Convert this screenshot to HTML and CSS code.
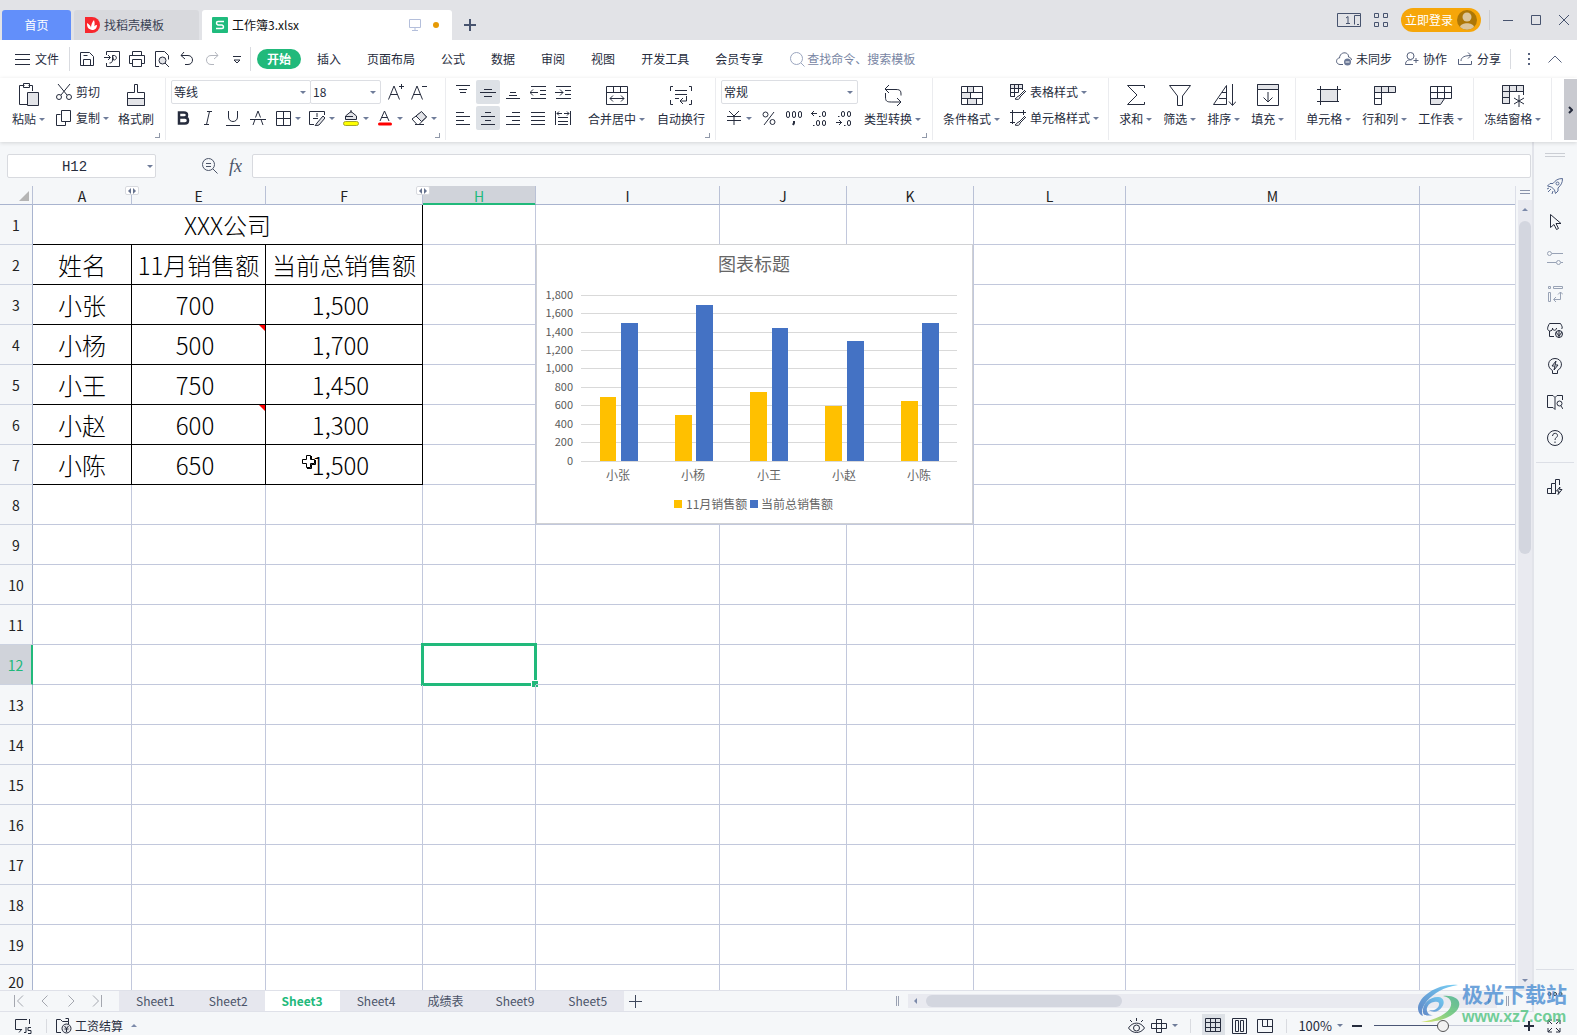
FILE: index.html
```html
<!DOCTYPE html>
<html lang="zh-CN">
<head>
<meta charset="utf-8">
<title>工作簿3.xlsx</title>
<link rel="stylesheet" href="styles.css">
</head>
<body>
<header class="titlebar">
  <button class="tab tab-home">首页</button>
  <button class="tab tab-docer">
    <svg width="16" height="16" viewBox="0 0 16 16"><path d="M1 0h7a8 8 0 0 1 0 16H1z" fill="#f8272d"/><path d="M8 13C4 12 3 10 3 6c2 1 4 3 4 5 0-3 1-6 3-8 1 3 1 6-1 8 1-2 2-3 4-3 0 3-2 5-5 5z" fill="#fff"/></svg>
    找稻壳模板
  </button>
  <button class="tab tab-file">
    <svg width="16" height="16" viewBox="0 0 16 16"><rect width="16" height="16" rx="1" fill="#1fbb7d"/><path d="M12 4.5H6C4 4.5 4 7.5 6 8h4c2 .5 2 3.500 0 3.500H4" fill="none" stroke="#fff" stroke-width="1.500"/></svg>
    工作簿3.xlsx
    <svg class="tab-screen" width="12" height="12" viewBox="0 0 12 12"><path d="M.5.5h11v8H.5zM6 9v2M3 11.500h6"/></svg>
    <span class="unsaved"></span>
  </button>
  <button class="newtab" aria-label="新建"><svg width="14" height="14" viewBox="0 0 14 14"><path d="M7 1v12M1 7h12" stroke-width="2"/></svg></button>
  <div class="title-tools">
    <button aria-label="窗口"><svg width="24" height="15" viewBox="0 0 24 15"><path d="M.5.5h23v13H.5zM9 5l2-1.500V10M9 10.500h4"/><path d="M23 2.500h-5.500v9M20 11.500h2"/></svg></button>
    <button class="apps" aria-label="应用"><svg width="14" height="14" viewBox="0 0 14 14"><path d="M.5.5h4v4h-4zM9.500.5h4v4h-4zM.5 9.500h4v4h-4zM9.500 9.500h4v4h-4z"/></svg></button>
    <button class="login">立即登录<svg width="20" height="20" viewBox="0 0 20 20"><circle cx="10" cy="10" r="10" fill="#ad7706" stroke="none"/><circle cx="10" cy="7" r="4.500" fill="#dcc59a" stroke="none"/><path d="M3 17c1-5 13-5 14 0a10 10 0 0 1-14 0z" fill="#dcc59a" stroke="none"/></svg></button>
    <i class="sep"></i>
    <button class="win" aria-label="最小化"><svg width="10" height="10" viewBox="0 0 10 10"><path d="M0 5.500h10"/></svg></button>
    <button class="win" aria-label="最大化"><svg width="10" height="10" viewBox="0 0 10 10"><path d="M.5.5h9v9h-9z"/></svg></button>
    <button class="win" aria-label="关闭"><svg width="10" height="10" viewBox="0 0 10 10"><path d="M0 0l10 10M10 0L0 10"/></svg></button>
  </div>
</header>

<nav class="menubar">
  <button class="file"><svg width="15" height="11" viewBox="0 0 15 11"><path d="M0 .5h15M0 5.500h15M0 10.500h15"/></svg>文件</button>
  <i class="sep"></i>
  <div class="quick">
    <button aria-label="保存"><svg width="16" height="16" viewBox="0 0 16 16"><path d="M1.500 1.500h9l4 4v9h-13zM4.500 14.500v-6h7v6M4.500 4.500h4"/></svg></button>
    <button aria-label="输出"><svg width="16" height="16" viewBox="0 0 16 16"><path d="M2.500 4V.5h13v15h-13V12M0 6.500h6M4 4l2.500 2.500L4 9M8.500 4.500c5-1 5 5 1 4.500l-1-4.500V9c0 2-1 3-3 3"/></svg></button>
    <button aria-label="打印"><svg width="16" height="16" viewBox="0 0 16 16"><path d="M3.500 4.500v-4h9v4M3.500 12.500h-3v-8h15v8h-3M3.500 8.500h9v7h-9z"/></svg></button>
    <button aria-label="打印预览"><svg width="16" height="16" viewBox="0 0 16 16"><path d="M5 15.500H1.500V.5h9l4 4v4"/><circle cx="8.500" cy="9.500" r="3.500" class="tint"/><path d="M11 12l4 4"/></svg></button>
    <button aria-label="撤销"><svg width="16" height="16" viewBox="0 0 16 16"><path d="M5 1L2 4.500 6 8M2 4.500h7c6 0 6 9 0 9H6"/></svg></button>
    <button class="dim" aria-label="恢复"><svg width="16" height="16" viewBox="0 0 16 16"><path d="M11 1l3 3.500L10 8M14 4.500H7c-6 0-6 9 0 9h3"/></svg></button>
    <button aria-label="更多"><svg width="16" height="16" viewBox="0 0 16 16"><path d="M4 5.500h8M5 9l3 3 3-3z"/></svg></button>
  </div>
  <i class="sep"></i>
  <div class="menus">
    <button class="on">开始</button><button>插入</button><button>页面布局</button><button>公式</button><button>数据</button><button>审阅</button><button>视图</button><button>开发工具</button><button>会员专享</button>
  </div>
  <label class="search"><svg width="15" height="15" viewBox="0 0 15 15"><circle cx="6.500" cy="6.500" r="6"/><path d="M11 11l3.500 3.500"/></svg><input type="text" placeholder="查找命令、搜索模板" aria-label="搜索"></label>
  <div class="share">
    <button class="sync"><svg width="16" height="14" viewBox="0 0 16 14"><path d="M7 12.500H4C-1 12 0 6 3.500 6 4-1 13-.5 12.500 5c2 .5 3 1.500 3 3"/><circle cx="11.500" cy="10" r="3.500" fill="#6b7896" stroke="none"/><path d="M9.500 10h4" stroke="#fff"/></svg>未同步</button>
    <button><svg width="14" height="14" viewBox="0 0 14 14"><circle cx="5.500" cy="4" r="3.500"/><path d="M8 12.500H.5c0-4 3-5 6-4.500M11 6v5M8.500 8.500h5"/></svg>协作</button>
    <button><svg width="15" height="14" viewBox="0 0 15 14"><path d="M.5 7v5.500h13V9M3 9c0-4 4-5.500 10-5.500M10 .5l3 3-3 3"/></svg>分享</button>
    <i class="sep"></i>
    <button class="dots" aria-label="更多"><svg width="2" height="12" viewBox="0 0 2 12"><path d="M1 0v2M1 5v2M1 10v2" stroke-width="2"/></svg></button>
    <button class="fold" aria-label="收起"><svg width="14" height="8" viewBox="0 0 14 8"><path d="M.5 7.500L7 1l6.500 6.500"/></svg></button>
  </div>
</nav>

<section class="ribbon">
  <div class="group g-clip">
    <button class="big"><svg width="24" height="24" viewBox="0 0 24 24"><path d="M7.500 2.500h-5v19h9M15.500 8V2.500h-4M6.500.5h6v4h-6z"/><path class="tint" d="M10.500 9.500h11v13h-11z"/></svg><span class="dd">粘贴</span></button>
    <div class="rows">
      <button class="inl"><svg width="16" height="16" viewBox="0 0 16 16"><path d="M2 0l9 11M14 0L5 11"/><circle cx="3" cy="13" r="2.500"/><circle cx="13" cy="13" r="2.500"/></svg><span>剪切</span></button>
      <button class="inl"><svg width="16" height="16" viewBox="0 0 16 16"><path d="M4.500 4.500h-4v11h9v-4M5.500.5h9v11h-9z"/></svg><span class="dd">复制</span></button>
    </div>
    <button class="big"><svg width="24" height="24" viewBox="0 0 24 24"><path d="M10.500 1.500h3v8h7v13h-17v-13h7z"/><path class="tint" d="M3.500 15.500h17v7h-17z"/></svg><span>格式刷</span></button>
    <i class="launch"></i>
  </div>
  <div class="group g-font">
    <div class="rows">
      <div class="row">
        <span class="sel font-name"><select aria-label="字体"><option>等线</option></select></span><span class="sel font-size"><select aria-label="字号"><option>18</option></select></span>
        <button class="grow" aria-label="增大字号"><svg width="16" height="16" viewBox="0 0 16 16"><path d="M.5 15.500L6 2l5.500 13.500M2.500 10.500h7M13.500 0v5M11 2.500h5"/></svg></button>
        <button class="grow" aria-label="减小字号"><svg width="16" height="16" viewBox="0 0 16 16"><path d="M.5 15.500L6 2l5.500 13.500M2.500 10.500h7M11 2.500h5"/></svg></button>
      </div>
      <div class="row tight">
        <button class="sq" aria-label="加粗"><svg width="16" height="16" viewBox="0 0 16 16"><path d="M4 2.500h5c4 0 4 5 0 5H4zM4 7.500h6c4 0 4 6 0 6H4z" stroke-width="2.500"/></svg></button>
        <button class="sq" aria-label="倾斜"><svg width="16" height="16" viewBox="0 0 16 16"><path d="M7 1.500h5M4 14.500h5M9.500 1.500l-3 13"/></svg></button>
        <button class="sq" aria-label="下划线"><svg width="16" height="16" viewBox="0 0 16 16"><path d="M3.500 1v6c0 6 9 6 9 0V1M1 15.500h14"/></svg></button>
        <button class="sq" aria-label="删除线"><svg width="16" height="16" viewBox="0 0 16 16"><path d="M3 15l2-5.500M13 15l-2-5.500M5.500 7.500L8 1l2.500 6.500M0 9.500h16"/></svg></button>
        <button class="drop" aria-label="边框"><svg width="16" height="16" viewBox="0 0 16 16"><path d="M1.500 1.500h14v14h-14zM8.500 1.500v14M1.500 8.500h14"/></svg></button>
        <button class="drop" aria-label="绘图边框"><svg width="16" height="16" viewBox="0 0 16 16"><path d="M15.500 5V1.500h-15v13H5M8 3v4M4 8.500h5"/><path class="tint" d="M8 13l6-7 2 2-6 7-4 1z"/></svg></button>
        <button class="drop" aria-label="填充颜色"><svg width="16" height="16" viewBox="0 0 16 16"><path class="tint" d="M2.500 9.500V6L8 1.500 13.500 6v3.500zM8 0v3M2 6.500h8"/><rect x=".5" y="11.500" width="15" height="4" rx="2" fill="#ff0" stroke="#a5a52a"/></svg></button>
        <button class="drop" aria-label="字体颜色"><svg width="16" height="16" viewBox="0 0 16 16"><path d="M3 11L7.500 1 12 11M4.500 7.500h6"/><rect x="1" y="12.500" width="14" height="3" rx="1.500" fill="red" stroke="none"/></svg></button>
        <button class="drop" aria-label="清除"><svg width="16" height="16" viewBox="0 0 16 16"><path d="M1 9l5 5.500h2l7.500-7.500-5-5zM4 14.500h9"/><path class="tint" d="M5 6l5.500-4.500L15.500 7l-5 4.500z"/></svg></button>
      </div>
    </div>
    <i class="launch"></i>
  </div>
  <div class="group g-align">
    <div class="rows">
      <div class="row tight">
        <button class="sq" aria-label="顶端对齐"><svg width="16" height="16" viewBox="0 0 16 16"><path d="M1 1.500h14M4 5.500h8M5 8.500h6"/></svg></button>
        <button class="sq act" aria-label="垂直居中"><svg width="16" height="16" viewBox="0 0 16 16"><path d="M4 5.500h8M0 8.500h16M4 12.500h8"/></svg></button>
        <button class="sq" aria-label="底端对齐"><svg width="16" height="16" viewBox="0 0 16 16"><path d="M5 8.500h6M4 11.500h8M1 14.500h14"/></svg></button>
        <button class="sq" aria-label="减少缩进"><svg width="16" height="16" viewBox="0 0 16 16"><path d="M1 2.500h15M10 6.500h6M10 10.500h6M1 14.500h15M0 8.500h8M3 5.500l-3 3 3 3"/></svg></button>
        <button class="sq" aria-label="增加缩进"><svg width="16" height="16" viewBox="0 0 16 16"><path d="M1 2.500h15M10 6.500h6M10 10.500h6M1 14.500h15M0 8.500h8M5 5.500l3 3-3 3"/></svg></button>
      </div>
      <div class="row tight">
        <button class="sq" aria-label="左对齐"><svg width="16" height="16" viewBox="0 0 16 16"><path d="M1 2.500h8M1 6.500h14M1 10.500h8M1 14.500h14"/></svg></button>
        <button class="sq act" aria-label="水平居中"><svg width="16" height="16" viewBox="0 0 16 16"><path d="M5 2.500h6M1 6.500h14M5 10.500h6M1 14.500h14"/></svg></button>
        <button class="sq" aria-label="右对齐"><svg width="16" height="16" viewBox="0 0 16 16"><path d="M7 2.500h8M1 6.500h14M7 10.500h8M1 14.500h14"/></svg></button>
        <button class="sq" aria-label="两端对齐"><svg width="16" height="16" viewBox="0 0 16 16"><path d="M1 2.500h14M1 6.500h14M1 10.500h14M1 14.500h14"/></svg></button>
        <button class="sq" aria-label="分散对齐"><svg width="16" height="16" viewBox="0 0 16 16"><path d="M.5 1v14M15.500 1v14M3 7.500h10M3 11.500h10M3 14.500h10M2 3.500h5M9 3.500h5M4 1.500l-2 2 2 2M12 1.500l2 2-2 2"/></svg></button>
      </div>
    </div>
    <div class="bigs">
      <button class="big"><svg width="24" height="24" viewBox="0 0 24 24"><path d="M1.500 3.500h21v18h-21zM1.500 9.500h21M8.500 3.500v6M15.500 3.500v6M5 15.500h14M8 12.500l-3 3 3 3M16 12.500l3 3-3 3"/></svg><span class="dd">合并居中</span></button>
      <button class="big"><svg width="24" height="24" viewBox="0 0 24 24"><path d="M4 3.500H1.500V8M20 3.500h2.500V8M4 21.500H1.500V17M20 21.500h2.500V17M6 7.500h12M6 11.500h12M6 15.500h4M17.500 13v5H11M14 15l-3 3 3 3"/></svg><span>自动换行</span></button>
    </div>
    <i class="launch"></i>
  </div>
  <div class="group g-num">
    <div class="rows">
      <div class="row"><span class="sel num-fmt"><select aria-label="数字格式"><option>常规</option></select></span></div>
      <div class="row tight">
        <button class="drop money" aria-label="货币"><svg width="16" height="16" viewBox="0 0 16 16"><path d="M3 1l5 5 5-5M1 6.500h14M1 10.500h14M8 6v9"/></svg></button>
        <button class="sq" aria-label="百分比"><svg width="16" height="16" viewBox="0 0 16 16"><circle cx="4.500" cy="4.500" r="2.500"/><circle cx="11.500" cy="12" r="2.500"/><path d="M13 2L3 15"/></svg></button>
        <button class="sq" aria-label="千位分隔"><svg width="16" height="16" viewBox="0 0 16 16"><rect x=".5" y="1.500" width="3" height="6" rx="1.500"/><rect x="6.500" y="1.500" width="3" height="6" rx="1.500"/><rect x="12.500" y="1.500" width="3" height="6" rx="1.500"/><path d="M8 11v2l-1 2" stroke-width="2"/></svg></button>
        <button class="sq" aria-label="增加小数"><svg width="16" height="16" viewBox="0 0 16 16"><path d="M0 3.500h6M3 1L.5 3.500 3 6M8 6.500h1.500M2 15.500h1.500"/><rect x="11.500" y="1.500" width="3" height="5" rx="1.500"/><rect x="5.500" y="10.500" width="3" height="5" rx="1.500"/><rect x="11.500" y="10.500" width="3" height="5" rx="1.500"/></svg></button>
        <button class="sq" aria-label="减少小数"><svg width="16" height="16" viewBox="0 0 16 16"><path d="M0 12.500h6M3 10l2.500 2.500L3 15M2 6.500h1.500M8 15.500h1.500"/><rect x="5.500" y="1.500" width="3" height="5" rx="1.500"/><rect x="11.500" y="1.500" width="3" height="5" rx="1.500"/><rect x="11.500" y="10.500" width="3" height="5" rx="1.500"/></svg></button>
      </div>
    </div>
    <button class="big"><svg width="24" height="24" viewBox="0 0 24 24"><path d="M8 2L4 6l4 4M4 6.500h11c5 0 5 2 5 6M4.500 10v4c0 4 1 5 6 5H20M16 15l4 4-4 4"/></svg><span class="dd">类型转换</span></button>
    <i class="launch"></i>
  </div>
  <div class="group g-style">
    <button class="big"><svg width="24" height="24" viewBox="0 0 24 24"><path class="tint" d="M7.500 3.500h6v6h-6zM1.500 9.500h9v6h-9zM7.500 15.500h9v6h-9z"/><path d="M1.500 3.500h21v18h-21zM1.500 9.500h21M1.500 15.500h21M7.500 3.500v6M13.500 3.500v6M10.500 9.500v6M7.500 15.500v6M16.500 15.500v6"/></svg><span class="dd">条件格式</span></button>
    <div class="rows">
      <button class="inl"><svg width="16" height="16" viewBox="0 0 16 16"><path class="tint" d="M.5.5h12v4H.5z"/><path d="M5 12.500H.5V.5h12V6M.5 4.500h12M.5 8.500h8M4.500.5v12M8.500.5v8M15 6l-6 6M16 7l-6 6M9 12c-2 0-2 2-4 3 3 1 5 0 5-2"/></svg><span class="dd">表格样式</span></button>
      <button class="inl"><svg width="16" height="16" viewBox="0 0 16 16"><path d="M0 2.500h16M2.500 0v14M0 12.500h5M13.500 0v5M15 6l-6 6M16 7l-6 6M9 12c-2 0-2 2-4 3 3 1 5 0 5-2"/></svg><span class="dd">单元格样式</span></button>
    </div>
  </div>
  <div class="group g-edit">
    <button class="big"><svg width="24" height="24" viewBox="0 0 24 24"><path d="M20.500 5V2.500h-17L13 12 3.500 21.500h17V19"/></svg><span class="dd">求和</span></button>
    <button class="big"><svg width="24" height="24" viewBox="0 0 24 24"><path d="M1.500 2.500h21L14.500 13v9.500h-5V13z"/></svg><span class="dd">筛选</span></button>
    <button class="big"><svg width="24" height="24" viewBox="0 0 24 24"><path d="M14.500 2.500v19H1.500zM7 15.500h7M10 9.500h4"/><path d="M20.500 1v21M17 18.500l3.500 4 3.500-4"/></svg><span class="dd">排序</span></button>
    <button class="big"><svg width="24" height="24" viewBox="0 0 24 24"><path d="M1.500 1.500h21v21h-21z"/><path class="tint" d="M1.500 1.500h21v5h-21z"/><path d="M12 9v10M7.500 14.500L12 19l4.500-4.500"/></svg><span class="dd">填充</span></button>
  </div>
  <div class="group">
    <button class="big"><svg width="24" height="24" viewBox="0 0 24 24"><path class="tint" d="M3.500 6.500h17v12h-17z"/><path d="M0 6.500h24M0 18.500h18M3.500 3v19M20.500 3v14M20 18.500h2"/></svg><span class="dd">单元格</span></button>
    <button class="big"><svg width="24" height="24" viewBox="0 0 24 24"><path class="tint" d="M1.500 3.500h21v6h-21z"/><path d="M8.500 3.500v18h-7v-18M1.500 15.500h7M15.500 3.500v6"/></svg><span class="dd">行和列</span></button>
    <button class="big"><svg width="24" height="24" viewBox="0 0 24 24"><path class="tint" d="M1.500 15.500h14l-4 6h-10z"/><path d="M1.500 3.500h21v12h-21zM1.500 9.500h21M8.500 3.500v12M15.500 3.500v12"/></svg><span class="dd">工作表</span></button>
  </div>
  <div class="group">
    <button class="big"><svg width="24" height="24" viewBox="0 0 24 24"><path class="tint" d="M1.500 2.500h21v6h-14v12h-7z"/><path d="M1.500 2.500h21V12M1.500 8.500h21M8.500 2.500v18h-7M15.500 2.500v6M1.500 14.500h7M18 12v12M13 15l10 6M23 15l-10 6"/></svg><span class="dd">冻结窗格</span></button>
  </div>
  <button class="more" aria-label="向右滚动"><svg width="5" height="8" viewBox="0 0 5 8"><path d="M1 1l3 3-3 3" stroke-width="2"/></svg></button>
</section>

<div class="work">
  <main class="book">
    <div class="formula">
      <label class="namebox"><input type="text" value="H12" aria-label="名称框"></label>
      <button aria-label="浏览公式"><svg width="16" height="16" viewBox="0 0 16 16"><circle cx="6.500" cy="6.500" r="6"/><path d="M4 5.500h5M4 8.500h5M11 11l4.500 4.500"/></svg></button>
      <button class="fx">fx</button>
      <input class="fxbox" type="text" aria-label="编辑栏">
    </div>
    <div class="sheet">
      <div class="cells">
        <table>
          <colgroup><col class="c-n"><col class="c-a"><col class="c-e"><col class="c-f"><col class="c-h"><col class="c-i"><col class="c-j"><col class="c-j"><col class="c-l"><col class="c-m"><col></colgroup>
          <thead><tr><th class="corner"></th><th>A<i class="hid"></i></th><th>E</th><th>F<i class="hid"></i></th><th class="cur">H</th><th>I</th><th>J</th><th>K</th><th>L</th><th>M</th><th></th></tr></thead>
          <tbody>
            <tr class="d"><th>1</th><td colspan="3" class="v">XXX公司</td><td></td><td></td><td></td><td></td><td></td><td></td><td></td></tr>
            <tr class="d"><th>2</th><td class="v">姓名</td><td class="v">11月销售额</td><td class="v">当前总销售额</td><td></td><td></td><td></td><td></td><td></td><td></td><td></td></tr>
            <tr class="d"><th>3</th><td class="v">小张</td><td class="v n">700</td><td class="v n">1,500</td><td></td><td></td><td></td><td></td><td></td><td></td><td></td></tr>
            <tr class="d"><th>4</th><td class="v">小杨</td><td class="v n note">500</td><td class="v n">1,700</td><td></td><td></td><td></td><td></td><td></td><td></td><td></td></tr>
            <tr class="d"><th>5</th><td class="v">小王</td><td class="v n">750</td><td class="v n">1,450</td><td></td><td></td><td></td><td></td><td></td><td></td><td></td></tr>
            <tr class="d"><th>6</th><td class="v">小赵</td><td class="v n note">600</td><td class="v n">1,300</td><td></td><td></td><td></td><td></td><td></td><td></td><td></td></tr>
            <tr class="d"><th>7</th><td class="v">小陈</td><td class="v n">650</td><td class="v n">1,500<svg class="cursor" width="16" height="16" viewBox="0 0 16 16"><path d="M5.500 1.500h4v4h4v4h-4v4h-4v-4h-4v-4h4z" fill="#fff" stroke="#000"/><path d="M10.500 2v3M14.500 6v4.500h-4v4H6" fill="none" stroke="#000"/></svg></td><td></td><td></td><td></td><td></td><td></td><td></td><td></td></tr>
            <tr><th>8</th><td></td><td></td><td></td><td></td><td></td><td></td><td></td><td></td><td></td><td></td></tr>
            <tr><th>9</th><td></td><td></td><td></td><td></td><td></td><td></td><td></td><td></td><td></td><td></td></tr>
            <tr><th>10</th><td></td><td></td><td></td><td></td><td></td><td></td><td></td><td></td><td></td><td></td></tr>
            <tr><th>11</th><td></td><td></td><td></td><td></td><td></td><td></td><td></td><td></td><td></td><td></td></tr>
            <tr><th class="cur">12</th><td></td><td></td><td></td><td class="selected"></td><td></td><td></td><td></td><td></td><td></td><td></td></tr>
            <tr><th>13</th><td></td><td></td><td></td><td></td><td></td><td></td><td></td><td></td><td></td><td></td></tr>
            <tr><th>14</th><td></td><td></td><td></td><td></td><td></td><td></td><td></td><td></td><td></td><td></td></tr>
            <tr><th>15</th><td></td><td></td><td></td><td></td><td></td><td></td><td></td><td></td><td></td><td></td></tr>
            <tr><th>16</th><td></td><td></td><td></td><td></td><td></td><td></td><td></td><td></td><td></td><td></td></tr>
            <tr><th>17</th><td></td><td></td><td></td><td></td><td></td><td></td><td></td><td></td><td></td><td></td></tr>
            <tr><th>18</th><td></td><td></td><td></td><td></td><td></td><td></td><td></td><td></td><td></td><td></td></tr>
            <tr><th>19</th><td></td><td></td><td></td><td></td><td></td><td></td><td></td><td></td><td></td><td></td></tr>
            <tr class="last"><th>20</th><td></td><td></td><td></td><td></td><td></td><td></td><td></td><td></td><td></td><td></td></tr>
          </tbody>
        </table>
        <svg class="chart" width="437" height="280" viewBox="0 0 437 280" role="img" aria-label="图表标题">
          <rect x=".5" y=".5" width="436" height="279" fill="#fff" stroke="#d0d1d4"/>
          <text class="ct" x="218" y="27">图表标题</text>
          <path class="cg" d="M45 51.500h376M45 69.500h376M45 88.500h376M45 106.500h376M45 124.500h376M45 143.500h376M45 161.500h376M45 180.500h376M45 198.500h376M45 217.500h376"/>
          <g class="cy"><text x="37" y="55">1,800</text><text x="37" y="73">1,600</text><text x="37" y="92">1,400</text><text x="37" y="110">1,200</text><text x="37" y="128">1,000</text><text x="37" y="147">800</text><text x="37" y="165">600</text><text x="37" y="184">400</text><text x="37" y="202">200</text><text x="37" y="221">0</text></g>
          <path class="bar b1" d="M64 153h16v64H64zM139 171h17v46h-17zM214 148h17v69h-17zM289 162h17v55h-17zM365 157h17v60h-17z"/>
          <path class="bar b2" d="M85 79h17v138H85zM160 61h17v156h-17zM236 84h16v133h-16zM311 97h17v120h-17zM386 79h17v138h-17z"/>
          <g class="cx"><text x="82" y="236">小张</text><text x="157" y="236">小杨</text><text x="233" y="236">小王</text><text x="308" y="236">小赵</text><text x="383" y="236">小陈</text></g>
          <path class="bar b1" d="M138 256h8v8h-8z"/><path class="bar b2" d="M214 256h8v8h-8z"/>
          <g class="cl"><text x="150" y="265">11月销售额</text><text x="225" y="265">当前总销售额</text></g>
        </svg>
      </div>
      <div class="vbar"><i class="split"></i><div class="vtrack"><i class="tri up"></i><i class="vthumb"></i><i class="tri down"></i></div></div>
    </div>
    <div class="tabs">
      <div class="tabnav">
        <button aria-label="首个"><svg width="10" height="12" viewBox="0 0 10 12"><path d="M.5 0v12M9 .5L3.500 6 9 11.500"/></svg></button>
        <button aria-label="上一个"><svg width="10" height="12" viewBox="0 0 10 12"><path d="M7.500.5L2 6l5.500 5.500"/></svg></button>
        <button aria-label="下一个"><svg width="10" height="12" viewBox="0 0 10 12"><path d="M2.500.5L8 6l-5.500 5.500"/></svg></button>
        <button aria-label="末个"><svg width="10" height="12" viewBox="0 0 10 12"><path d="M9.500 0v12M1 .5L6.500 6 1 11.500"/></svg></button>
      </div>
      <div class="tablist"><button>Sheet1</button><button>Sheet2</button><button class="on">Sheet3</button><button>Sheet4</button><button class="zh">成绩表</button><button>Sheet9</button><button>Sheet5</button></div>
      <button class="addsheet" aria-label="新建工作表"><svg width="13" height="13" viewBox="0 0 13 13"><path d="M6.500 0v13M0 6.500h13"/></svg></button>
      <div class="hbar"><i class="grip"></i><div class="htrack"><i class="tri left"></i><i class="hthumb"></i><i class="tri right"></i></div><i class="grip"></i></div>
    </div>
  </main>
  <aside class="side">
    <i class="split"></i>
    <button class="blue" aria-label="快捷"><svg width="16" height="16" viewBox="0 0 16 16"><path d="M15.500.5c-5 0-7 2-9.500 5H3L.5 8l4 1 3 3 1 3.500L11 13v-3c3-3 4.500-5 4.500-9.500z"/><circle cx="10.500" cy="5.500" r="1.500"/><path d="M4 11l-3 3M2 10l-2 1M6 13l-1 3"/></svg></button>
    <button aria-label="选择"><svg width="16" height="16" viewBox="0 0 16 16"><path d="M3.500.5v13l3.500-3 2.500 5 2-1-2.500-5h5z"/></svg></button>
    <button class="faint" aria-label="属性"><svg width="16" height="16" viewBox="0 0 16 16"><circle cx="2.500" cy="3.500" r="2"/><circle cx="11.500" cy="12.500" r="2"/><path d="M5 3.500h11M0 12.500h9M14 12.500h2"/></svg></button>
    <button class="faint" aria-label="透视"><svg width="16" height="16" viewBox="0 0 16 16"><path d="M1.500.5h2v2h-2zM6.500.5h9v2h-9zM1.500 6.500h2v9h-2zM13.500 6v7.500H7M11 8.500L13.500 6 16 8.500M9 11l-2.500 2.500L9 16"/></svg></button>
    <button aria-label="模板"><svg width="16" height="16" viewBox="0 0 16 16"><path d="M7 14.500H2.500V9C-.5 8 .5 5 2.500 1.500h11C15 4 16 6 14.500 7M5.500 6v1c0 2-3 2-3 2M5.500 6c0 3 4 3 4 0"/><circle cx="12" cy="12" r="3.500" class="tint"/><path d="M12 8v8M9 10l3 4 3-4"/></svg></button>
    <button aria-label="灵感"><svg width="16" height="16" viewBox="0 0 16 16"><path d="M5.500 12.500C-1 9 1 .5 8 .5s9 8.500 2.500 12v3h-5z"/><path d="M9 3L5 8h3l-1 4 4-5H8z"/></svg></button>
    <button aria-label="查找资料"><svg width="16" height="16" viewBox="0 0 16 16"><path d="M8 3.500L6 1.500H.5v12H6l2 2M8 3.500l2-2h5.500V6M8 3.500v12"/><circle cx="12.500" cy="9.500" r="2.500"/><path d="M14 12l2 3"/></svg></button>
    <button aria-label="帮助"><svg width="16" height="16" viewBox="0 0 16 16"><circle cx="8" cy="8" r="7.500"/><path d="M5.500 6c0-3.500 5-3.500 5-.5 0 2-2.500 2-2.500 4.500M8 11.500V13"/></svg></button>
    <hr>
    <button aria-label="图表"><svg width="16" height="16" viewBox="0 0 16 16"><path d="M9 14.500H.5v-5h4v5M4.500 9.500v-5h4v10M8.500 4.500v-4h4V6M13 8l-3.500 4H12l-1 3.500 4-5h-2.500z"/></svg></button>
    <hr class="low">
    <button class="ooo" aria-label="更多"><svg width="16" height="6" viewBox="0 0 16 6"><circle cx="2.500" cy="3" r="1.500"/><circle cx="8" cy="3" r="1.500"/><circle cx="13.500" cy="3" r="1.500"/></svg></button>
  </aside>
</div>

<footer class="status">
  <button aria-label="宏"><svg width="17" height="16" viewBox="0 0 17 16"><path d="M12 1.500H.5v10H7M7 11l-3 3.500M14.500 1v5M11 9v5.500H9M16 9.500h-3v3h3v3h-3"/></svg></button>
  <i class="sep"></i>
  <button class="calc"><svg width="16" height="16" viewBox="0 0 16 16"><path d="M5 14.500H.5v-13h4l2 2h6V6M9.500.5h3v3"/><circle cx="10.500" cy="10.500" r="4.500" class="tint"/><path d="M8.500 8l2 2.500 2-2.500M8.500 11h4M10.500 10v4"/></svg>工资结算<i class="tri up"></i></button>
  <div class="views">
    <button aria-label="护眼模式"><svg width="17" height="16" viewBox="0 0 17 16"><path d="M.5 10c4-6.500 12-6.500 16 0-4 6-12 6-16 0zM2 2l2 2M8.500 0v3M15 2l-2 2"/><circle cx="8.500" cy="10" r="3"/></svg></button>
    <button class="dd" aria-label="阅读模式"><svg width="17" height="16" viewBox="0 0 17 16"><path d="M5.500 1.500h5v13h-5zM.5 5.500h15v5H.5z"/></svg></button>
    <i class="sep"></i>
    <button class="act" aria-label="普通视图"><svg width="17" height="16" viewBox="0 0 17 16"><path d="M.5 1.500h15v13H.5zM5.500 1.500v13M10.500 1.500v13M.5 5.500h15M.5 10.500h15"/></svg></button>
    <button aria-label="页面布局"><svg width="17" height="16" viewBox="0 0 17 16"><path d="M1.500.5h14v15h-14zM4.500 2.500h3v11h-3zM9.500 2.500h3v11h-3z"/></svg></button>
    <button class="view" aria-label="分页预览"><svg width="17" height="16" viewBox="0 0 17 16"><path d="M.5 1.500h15v13H.5zM5.500 1.500v7h10M10.500 1.500v7"/></svg></button>
    <i class="sep"></i>
    <button class="dd">100%</button>
    <button class="step minus" aria-label="缩小"><svg width="10" height="10" viewBox="0 0 10 10"><path d="M0 5h10" stroke-width="2"/></svg></button>
    <input class="zoom" type="range" min="0" max="100" value="50" aria-label="缩放">
    <button class="step" aria-label="放大"><svg width="10" height="10" viewBox="0 0 10 10"><path d="M0 5h10M5 0v10" stroke-width="2"/></svg></button>
    <button class="full" aria-label="全屏"><svg width="14" height="14" viewBox="0 0 14 14"><path d="M1 5V1h4M1 1l4 4M9 1h4v4M13 1L9 5M1 9v4h4M1 13l4-4M13 9v4H9M13 13L9 9"/></svg></button>
  </div>
</footer>

<div class="mark">
  <svg width="42" height="40" viewBox="0 0 42 40"><defs><linearGradient id="mb" x1="0" y1="1" x2="1" y2="0"><stop offset="0" stop-color="#3f6fbd"/><stop offset="1" stop-color="#55c3f2"/></linearGradient><linearGradient id="mg" x1="0" y1="1" x2="1" y2="0"><stop offset="0" stop-color="#d5e04a"/><stop offset=".5" stop-color="#62c46a"/><stop offset="1" stop-color="#3fae8a"/></linearGradient></defs><path d="M40 1C20-1 1 12 0 24c0 4 2 7 5 8-2-4-1-9 4-15C16 9 26 3 40 1z" fill="url(#mb)"/><path d="M5 28c-1-9 8-16 16-15 5 1 6 6 3 10-3 5-9 6-13 3 5 1 9-1 10-5 1-3-2-4-5-3-6 1-9 7-6 11 1 2 3 2 5 2-5 1-10 1-10-3z" fill="url(#mb)"/><path d="M25 12c10-1 18 3 16 10-2 9-18 17-38 16 13-2 25-7 29-14 3-6 0-11-7-12z" fill="url(#mg)"/></svg>
  <div class="marktext"><b>极光下载站</b><span>www.xz7.com</span></div>
</div>
</body>
</html>
```
FILE: styles.css
```css
* { box-sizing: border-box; }
html, body { height: 100%; }
body {
  margin: 0;
  display: flex;
  flex-direction: column;
  overflow: hidden;
  background: #f5f7f9;
  color: #262c3d;
  font: 12px/18px "Noto Sans CJK SC", sans-serif;
}
button, input, select { font: inherit; color: inherit; margin: 0; }
button {
  display: flex;
  align-items: center;
  justify-content: center;
  flex: none;
  padding: 0;
  border: 0;
  background: none;
  white-space: nowrap;
}
svg { display: block; flex: none; fill: none; stroke: currentColor; }
svg text { stroke: none; }
.tint { fill: #e3e4e8; }
i { flex: none; }
.sep { width: 1px; height: 20px; background: #d9dbe0; }

/* drop-down arrow after a label */
.dd::after, .drop::after, .sel::after, .namebox::after {
  content: "";
  flex: none;
  border: 3px solid transparent;
  border-top-color: #6f7c99;
  border-bottom: 0;
}
.dd { display: flex; align-items: center; gap: 3px; }

/* title bar */
.titlebar {
  display: flex;
  align-items: flex-end;
  flex: none;
  height: 40px;
  padding-left: 2px;
  background: #e2e3e7;
  color: #47536e;
}
.tab { height: 30px; border-radius: 3px 3px 0 0; gap: 4px; }
.tab svg { stroke: none; }
.tab-home { width: 69px; background: #628ffa; color: #fff; }
.tab-docer { width: 125px; margin-left: 3px; padding-left: 10px; justify-content: flex-start; background: #d8d9dd; color: #3a4254; }
.tab-file { width: 250px; margin-left: 3px; padding: 0 13px 0 10px; justify-content: flex-start; background: #fff; color: #111; }
.tab .tab-screen { margin-left: auto; stroke: #b4bfdb; }
.unsaved { width: 6px; height: 6px; margin-left: 8px; border-radius: 50%; background: #e69a05; }
.newtab { width: 36px; height: 30px; }
.title-tools { display: flex; align-items: center; height: 40px; margin-left: auto; padding-right: 8px; }
.apps { margin: 0 13px; }
.login { width: 80px; height: 24px; gap: 4px; border-radius: 12px; background: #f6a609; color: #fff; }
.title-tools .sep { margin-left: 8px; background: #cdced3; }
.win { margin-left: 13px; }
.win + .win { margin-left: 18px; }

/* menu row */
.menubar { display: flex; align-items: center; flex: none; height: 38px; padding: 0 15px; background: #fff; }
.file { gap: 5px; margin-right: 10px; }
.menubar > .sep { height: 24px; }
.quick { display: flex; gap: 1px; padding: 0 1px 0 5px; }
.quick button { width: 24px; height: 24px; }
.dim { color: #b3b6be; }
.menus { display: flex; gap: 6px; margin-left: 6px; }
.menus button { height: 20px; padding: 0 10px; border-radius: 10px; }
.menus .on { background: #21b97b; color: #fff; font-weight: 700; }
.search { display: flex; align-items: center; gap: 2px; margin-left: 17px; color: #9ba6bf; }
.search input { width: 120px; padding: 0; border: 0; outline: 0; background: none; }
.search input::placeholder { color: #7885a3; opacity: 1; }
.share { display: flex; align-items: center; margin-left: auto; }
.share button { gap: 4px; margin-right: 11px; }
.share .sync { margin-right: 13px; }
.share svg { color: #56617c; }
.share .sep { margin: 0 17px 0 -2px; }
.share .dots { margin-right: 18px; }
.share .fold { margin-right: 0; }

/* ribbon */
.ribbon {
  position: relative;
  z-index: 2;
  display: flex;
  flex: none;
  height: 64px;
  padding-bottom: 2px;
  background: #fff;
  box-shadow: 0 1px 4px rgba(0, 0, 0, .14);
}
.group { position: relative; display: flex; flex: none; gap: 11px; padding: 2px 10px 0; border-right: 1px solid #ebecef; }
.launch { position: absolute; right: 5px; bottom: 2px; width: 5px; height: 5px; border: solid #9098a9; border-width: 0 1px 1px 0; }
.big { flex-direction: column; justify-content: flex-start; gap: 3px; padding-top: 3px; }
.bigs { display: flex; gap: 12px; margin-left: 2px; }
.rows { display: flex; flex-direction: column; gap: 2px; }
.row { display: flex; height: 24px; }
.tight { gap: 1px; }
.inl { height: 24px; gap: 4px; justify-content: flex-start; }
.sq { width: 24px; height: 24px; border-radius: 2px; }
.act { background: #dde1e6; }
.drop { width: 33px; height: 24px; gap: 4px; }
.money { width: 35px; }
.grow { margin-left: 7px; }
.g-clip { padding: 2px 11px 0 12px; }
.g-clip .rows { margin-right: -2px; }
.g-font { padding: 2px 5px 0; }
.g-align { padding-left: 5px; }
.g-num { gap: 6px; padding: 2px 11px 0 5px; }
.g-style { gap: 10px; padding-right: 9px; }
.g-edit { padding-right: 11px; }
.sel { position: relative; height: 24px; border: 1px solid #dcdee3; border-radius: 2px; }
.sel select { width: 100%; height: 22px; padding: 0 2px; border: 0; outline: 0; appearance: none; background: none; }
.sel::after { position: absolute; right: 4px; top: 10px; }
.font-name { width: 140px; }
.font-size { width: 71px; margin-left: -1px; }
.num-fmt { width: 137px; }
.more { width: 13px; margin: 1px 0 0 auto; background: #c9cad0; }

/* formula bar */
.work { display: flex; flex: 1; min-height: 0; }
.book { display: flex; flex-direction: column; flex: 1; min-width: 0; }
.formula { display: flex; align-items: center; flex: none; height: 44px; padding: 4px 1px 0 7px; color: #4b5468; }
.namebox { display: flex; align-items: center; width: 149px; height: 24px; margin-right: 46px; padding-right: 2px; border: 1px solid #d8dadf; border-radius: 2px; background: #fff; }
.namebox input { flex: 1; min-width: 0; padding: 2px 6px 0 0; border: 0; outline: 0; background: none; text-align: center; color: #262c3d; font: 14px "Liberation Mono", monospace; }
.fx { margin: 0 10px 0 11px; font: italic 18px "Liberation Serif", serif; }
.fxbox { flex: 1; min-width: 0; height: 24px; border: 1px solid #d8dadf; border-radius: 2px; outline: 0; background: #fff; }

/* cell grid */
.sheet { display: flex; flex: 1; min-height: 0; }
.cells { position: relative; flex: 1; min-width: 0; overflow: hidden; border-right: 1px solid #dcdfe8; }
table { width: 100%; table-layout: fixed; border-collapse: separate; border-spacing: 0; }
.c-n { width: 33px; } .c-a { width: 99px; } .c-e { width: 134px; } .c-f { width: 157px; } .c-h { width: 113px; }
.c-i { width: 184px; } .c-j { width: 127px; } .c-l { width: 152px; } .c-m { width: 294px; }
th, td { position: relative; padding: 0; text-align: center; white-space: nowrap; }
th { font-size: 14px; font-weight: 400; color: #222; }
thead th { height: 19px; padding-top: 2px; line-height: 16px; border-bottom: 1px solid #a9b4cf; border-right: 1px solid #b9c1d6; }
thead th:last-child { border-right: 0; }
thead .cur { background: #d0d3da; color: #21b97b; border-bottom-color: #21b97b; box-shadow: inset 0 -1px #21b97b; }
.corner::after { content: ""; position: absolute; right: 3px; bottom: 3px; border: 5px solid #b5b5b5; border-top-color: transparent; border-left-color: transparent; }
.hid { position: absolute; z-index: 1; right: -8px; top: 0; width: 14px; height: 9px; border: 1px solid #d8dadf; border-radius: 2px; background: #fff; }
.hid::before, .hid::after { content: ""; position: absolute; top: 1px; border: 3px solid transparent; }
.hid::before { left: 2px; border-right-color: #66738f; border-left: 0; }
.hid::after { right: 2px; border-left-color: #66738f; border-right: 0; }
tbody tr { height: 40px; background: #fff; }
tbody .last { height: 34px; }
tbody th { background: #f5f7f9; border-right: 1px solid #a9b4cf; border-bottom: 1px solid #ccd2e0; }
tbody th.cur { background: #d0d3da; color: #21b97b; border-right: 2px solid #21b97b; }
td { border-right: 1px solid #c2c8dc; border-bottom: 1px solid #c2c8dc; }
td:last-child { border-right: 0; }
.v { border-color: #000; color: #000; font-size: 24px; font-weight: 300; line-height: 30px; }
.n { padding-right: 7px; }
.note::after { content: ""; position: absolute; top: 0; right: 0; border: 3px solid red; border-left-color: transparent; border-bottom-color: transparent; }
.selected::before { content: ""; position: absolute; inset: -2px; border: 3px solid #21b97b; }
.selected::after { content: ""; position: absolute; right: -3px; bottom: -3px; width: 6px; height: 6px; border: solid #fff; border-width: 1px 0 0 1px; background: #21b97b; }
.cursor { position: absolute; left: 35px; top: 9px; }
.chart { position: absolute; left: 536px; top: 58px; }
.chart text { fill: #666; font-size: 12px; font-weight: 400; }
.chart .ct { font-size: 18px; text-anchor: middle; }
.chart .cy text { fill: #595959; font-size: 11px; text-anchor: end; }
.chart .cx text { text-anchor: middle; }
.cg { stroke: #d9d9d9; }
.bar { stroke: none; }
.b1 { fill: #ffc000; }
.b2 { fill: #4472c4; }

/* scroll bars */
.split { width: 10px; height: 4px; border: solid #8a94aa; border-width: 1px 0; }
.tri { border: 3px solid transparent; }
.tri.up { border-bottom-color: #7c8aaa; border-top: 0; }
.tri.down { border-top-color: #7c8aaa; border-bottom: 0; }
.tri.left { border-right-color: #7c8aaa; border-left: 0; }
.tri.right { border-left-color: #7c8aaa; border-right: 0; }
.vbar { display: flex; flex-direction: column; align-items: center; width: 16px; padding: 4px 0 0 2px; }
.vtrack { display: flex; flex-direction: column; align-items: center; flex: 1; width: 14px; margin-top: 6px; padding: 8px 0; background: #e9eaf0; }
.vthumb { width: 12px; height: 43%; margin-top: 10px; border-radius: 6px; background: #d3d6df; }
.vtrack .down { margin-top: auto; }
.tabs { display: flex; flex: none; height: 22px; border-top: 1px solid #dfe1e9; border-bottom: 1px solid #dfe1e9; }
.tabnav { display: flex; width: 119px; padding-left: 14px; gap: 16px; color: #a4a7af; }
.tablist { display: flex; background: #e6e7ee; color: #4a5368; }
.tablist button { padding: 0 17px; }
.tablist .zh { padding: 0 15px; }
.tablist .on { background: #fff; color: #21b97b; font-weight: 700; }
.addsheet { width: 23px; color: #3f485c; }
.hbar { display: flex; align-items: center; flex: 1; margin: 0 23px 0 249px; gap: 9px; }
.grip { width: 3px; height: 10px; border: solid #9aa1b2; border-width: 0 1px; }
.htrack { display: flex; align-items: center; flex: 1; height: 14px; padding: 0 6px; background: #e9eaf0; }
.hthumb { width: 34%; height: 12px; margin-left: 9px; border-radius: 6px; background: #d3d6df; }
.htrack .right { margin-left: auto; }

/* right tool strip */
.side { display: flex; flex-direction: column; align-items: center; flex: none; width: 45px; padding: 11px 2px 0 0; border-left: 2px solid #e2e4ea; }
.side .split { width: 20px; margin-bottom: 21px; border-color: #cbced4; }
.side button { height: 16px; margin-bottom: 20px; }
.side .blue { color: #5a6c94; }
.side .faint { color: #98a2b5; }
.side hr { width: 38px; margin: -4px 0 16px; border: 0; border-top: 1px solid #dcdfe6; }
.side .low { margin: auto 0 16px; }
.side .ooo { margin-bottom: 10px; }

/* status bar */
.status { display: flex; align-items: center; flex: none; height: 23px; padding: 4px 16px 0 15px; }
.status .sep { height: 14px; margin: 0 9px 0 14px; }
.calc { gap: 3px; }
.calc .tri { margin-left: 5px; }
.views { display: flex; align-items: center; margin-left: auto; }
.views .dd { margin-left: 6px; gap: 4px; }
.views .sep { margin: 0 11px 0 12px; }
.views .act { width: 23px; height: 21px; margin: -2px 6px 0 0; }
.view { margin-left: 9px; }
.views .sep + .dd { margin-left: 0; gap: 5px; font-size: 13px; }
.step { margin-left: 12px; }
.minus { margin-left: 9px; }
.zoom { width: 138px; height: 13px; margin-left: 12px; appearance: none; background: linear-gradient(90deg, #4a5675 50%, #c7ccd9 50%) center / 100% 1px no-repeat; }
.zoom::-webkit-slider-thumb { appearance: none; width: 12px; height: 12px; border: 1px solid #555; border-radius: 50%; background: #f2f2f2; }
.full { margin-left: 13px; }

/* site mark over the bottom right corner */
.mark { position: absolute; z-index: 3; right: 10px; bottom: 7px; display: flex; align-items: center; gap: 2px; opacity: .8; pointer-events: none; }
.mark svg { stroke: none; }
.marktext { display: flex; flex-direction: column; width: 105px; color: #4b8ed3; }
.marktext b { font-size: 21px; line-height: 26px; font-weight: 700; }
.marktext span { font: 700 16px/22px "Liberation Sans", sans-serif; color: #4fc37f; }
```
